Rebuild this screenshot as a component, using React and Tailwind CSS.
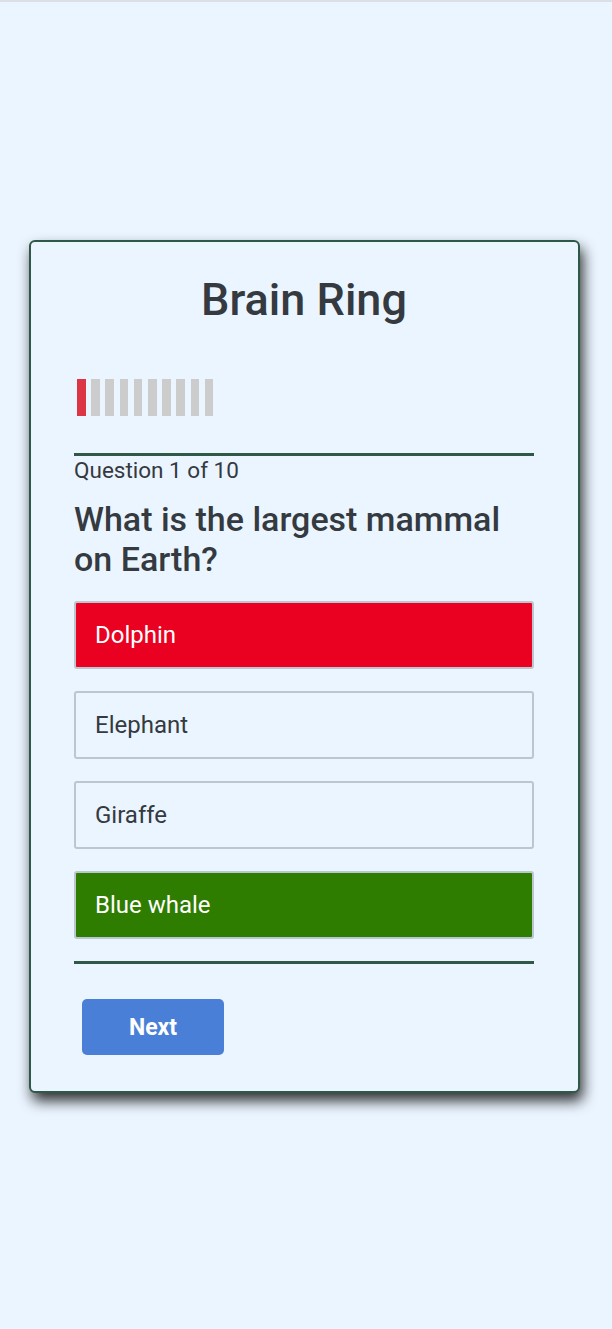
export default function App() {
  const bars = Array.from({ length: 10 }, (_, i) => i);
  const options = [
    { label: "Dolphin", cls: "bg-[#ea0020] text-white" },
    { label: "Elephant", cls: "bg-transparent text-[#343a40]" },
    { label: "Giraffe", cls: "bg-transparent text-[#343a40]" },
    { label: "Blue whale", cls: "bg-[#2e7d00] text-white" },
  ];
  return (
    <div
      className="min-h-[1329px] bg-[#ebf5ff] border-t-2 border-[#dcdfe4] pt-[238px] pl-[29px]"
      style={{ fontFamily: "Roboto, 'Noto Sans', sans-serif" }}
    >
      <div className="w-[551px] border-2 border-[#2f5846] rounded-[6px] bg-[#ebf5ff] shadow-[3px_8px_14px_rgba(0,0,0,0.8)] pt-[31px] pb-[36px] pl-[43px] pr-[44px]">
        <h1 className="text-center text-[45px] leading-[54px] font-medium text-[#343a40]">
          Brain Ring
        </h1>
        <div className="mt-[52px] flex gap-[5.5px] pl-[3px]">
          {bars.map((i) => (
            <div
              key={i}
              className={
                i === 0
                  ? "w-[8.7px] h-[37px] bg-[#dc3545]"
                  : "w-[8.7px] h-[37px] bg-[#cccccc]"
              }
            />
          ))}
        </div>
        <div className="mt-[37px] h-[3px] bg-[#2f5846]" />
        <div className="text-[22.5px] leading-[26px] text-[#343a40] mt-[1px]">
          Question 1 of 10
        </div>
        <h2 className="mt-[16px] text-[34px] leading-[40px] font-medium text-[#343a40]">
          What is the largest mammal on Earth?
        </h2>
        <div className="mt-[22px] flex flex-col gap-[22.5px]">
          {options.map((o) => (
            <div
              key={o.label}
              className={
                "h-[67.5px] border-2 border-[#bcc6cf] rounded-[3px] flex items-center pl-[19px] text-[24px] " +
                o.cls
              }
            >
              {o.label}
            </div>
          ))}
        </div>
        <div className="mt-[22px] h-[3px] bg-[#2f5846]" />
        <button className="mt-[35px] ml-[8px] w-[142px] h-[56px] rounded-[5px] bg-[#4a7fd8] text-white font-bold text-[23px] flex items-center justify-center pt-[3px]">
          Next
        </button>
      </div>
    </div>
  );
}
